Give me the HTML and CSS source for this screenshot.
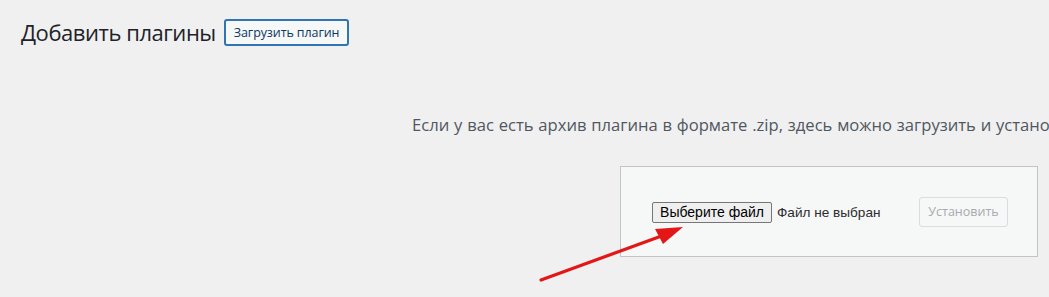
FILE: index.html
```html
<!DOCTYPE html>
<html lang="ru">
<head>
<meta charset="utf-8">
<title>Добавить плагины</title>
<link rel="stylesheet" href="styles.css">
</head>
<body>
<div class="page">
  <div class="title-row">
    <h1 class="title">Добавить плагины</h1>
    <a class="title-action" href="#">Загрузить плагин</a>
  </div>
  <div class="help-clip">
    <p class="help">Если у вас есть архив плагина в формате .zip, здесь можно загрузить и установить его или обновить существующий плагин.</p>
  </div>
  <form class="upload-box">
    <div class="file-field">
      <span class="file-btn">Выберите файл</span>
      <span class="file-name">Файл не выбран</span>
    </div>
    <span class="install-btn">Установить</span>
  </form>
  <svg class="arrow" width="160" height="70" viewBox="0 0 160 70">
    <line x1="12" y1="64" x2="138" y2="18" stroke="#e31717" stroke-width="3.2" stroke-linecap="round"/>
    <polygon points="154,11 126,13 134,28" fill="#e31717"/>
  </svg>
</div>
</body>
</html>
```
FILE: styles.css
```css
html, body {
  margin: 0;
  padding: 0;
  background: #f0f0f1;
  width: 1049px;
  height: 297px;
  overflow: hidden;
}
.page {
  position: relative;
  height: 297px;
  font-family: "Open Sans", "Noto Sans", sans-serif;
}
.title-row {
  display: flex;
  align-items: center;
  gap: 8px;
  padding: 18px 0 0 21px;
}
.title {
  margin: 0;
  font-weight: 400;
  font-size: 22px;
  line-height: 28px;
  color: #1d2327;
  letter-spacing: -0.45px;
}
.title-action {
  display: inline-flex;
  align-items: center;
  box-sizing: border-box;
  height: 27px;
  padding: 0 8px;
  border: 2px solid #2f74b3;
  border-radius: 3px;
  background: #f6f7f7;
  color: #0a3a62;
  font-size: 12.5px;
  text-decoration: none;
  letter-spacing: -0.1px;
}
.help-clip {
  width: 1049px;
  overflow: hidden;
}
.help {
  margin: 68px 0 0 412px;
  white-space: nowrap;
  font-size: 16.6px;
  line-height: 22px;
  color: #50575e;
  letter-spacing: 0;
  word-spacing: 0.5px;
}
.upload-box {
  box-sizing: border-box;
  margin: 30px 0 0 620px;
  width: 418px;
  height: 91px;
  border: 1px solid #c3c4c7;
  background: #f6f7f7;
  display: flex;
  align-items: center;
  justify-content: space-between;
  padding: 0 29px 0 31px;
}
.file-field {
  display: flex;
  align-items: center;
  gap: 5px;
  font-family: "Liberation Sans", Arial, sans-serif;
  font-size: 14px;
  color: #1d1d1d;
  margin-top: 1px;
}
.file-btn {
  box-sizing: border-box;
  display: inline-flex;
  align-items: center;
  justify-content: center;
  width: 120px;
  height: 21px;
  border: 1px solid #767676;
  border-radius: 2px;
  background: #efefef;
  color: #000;
}
.file-name {
  color: #2c2c2c;
  font-size: 13.6px;
}
.install-btn {
  box-sizing: border-box;
  display: inline-flex;
  align-items: center;
  justify-content: center;
  width: 89px;
  height: 30px;
  border: 1px solid #dcdcde;
  border-radius: 3px;
  background: #f6f7f7;
  color: #a7aaad;
  font-size: 12.5px;
}
.arrow {
  position: absolute;
  left: 529px;
  top: 216px;
}
```
